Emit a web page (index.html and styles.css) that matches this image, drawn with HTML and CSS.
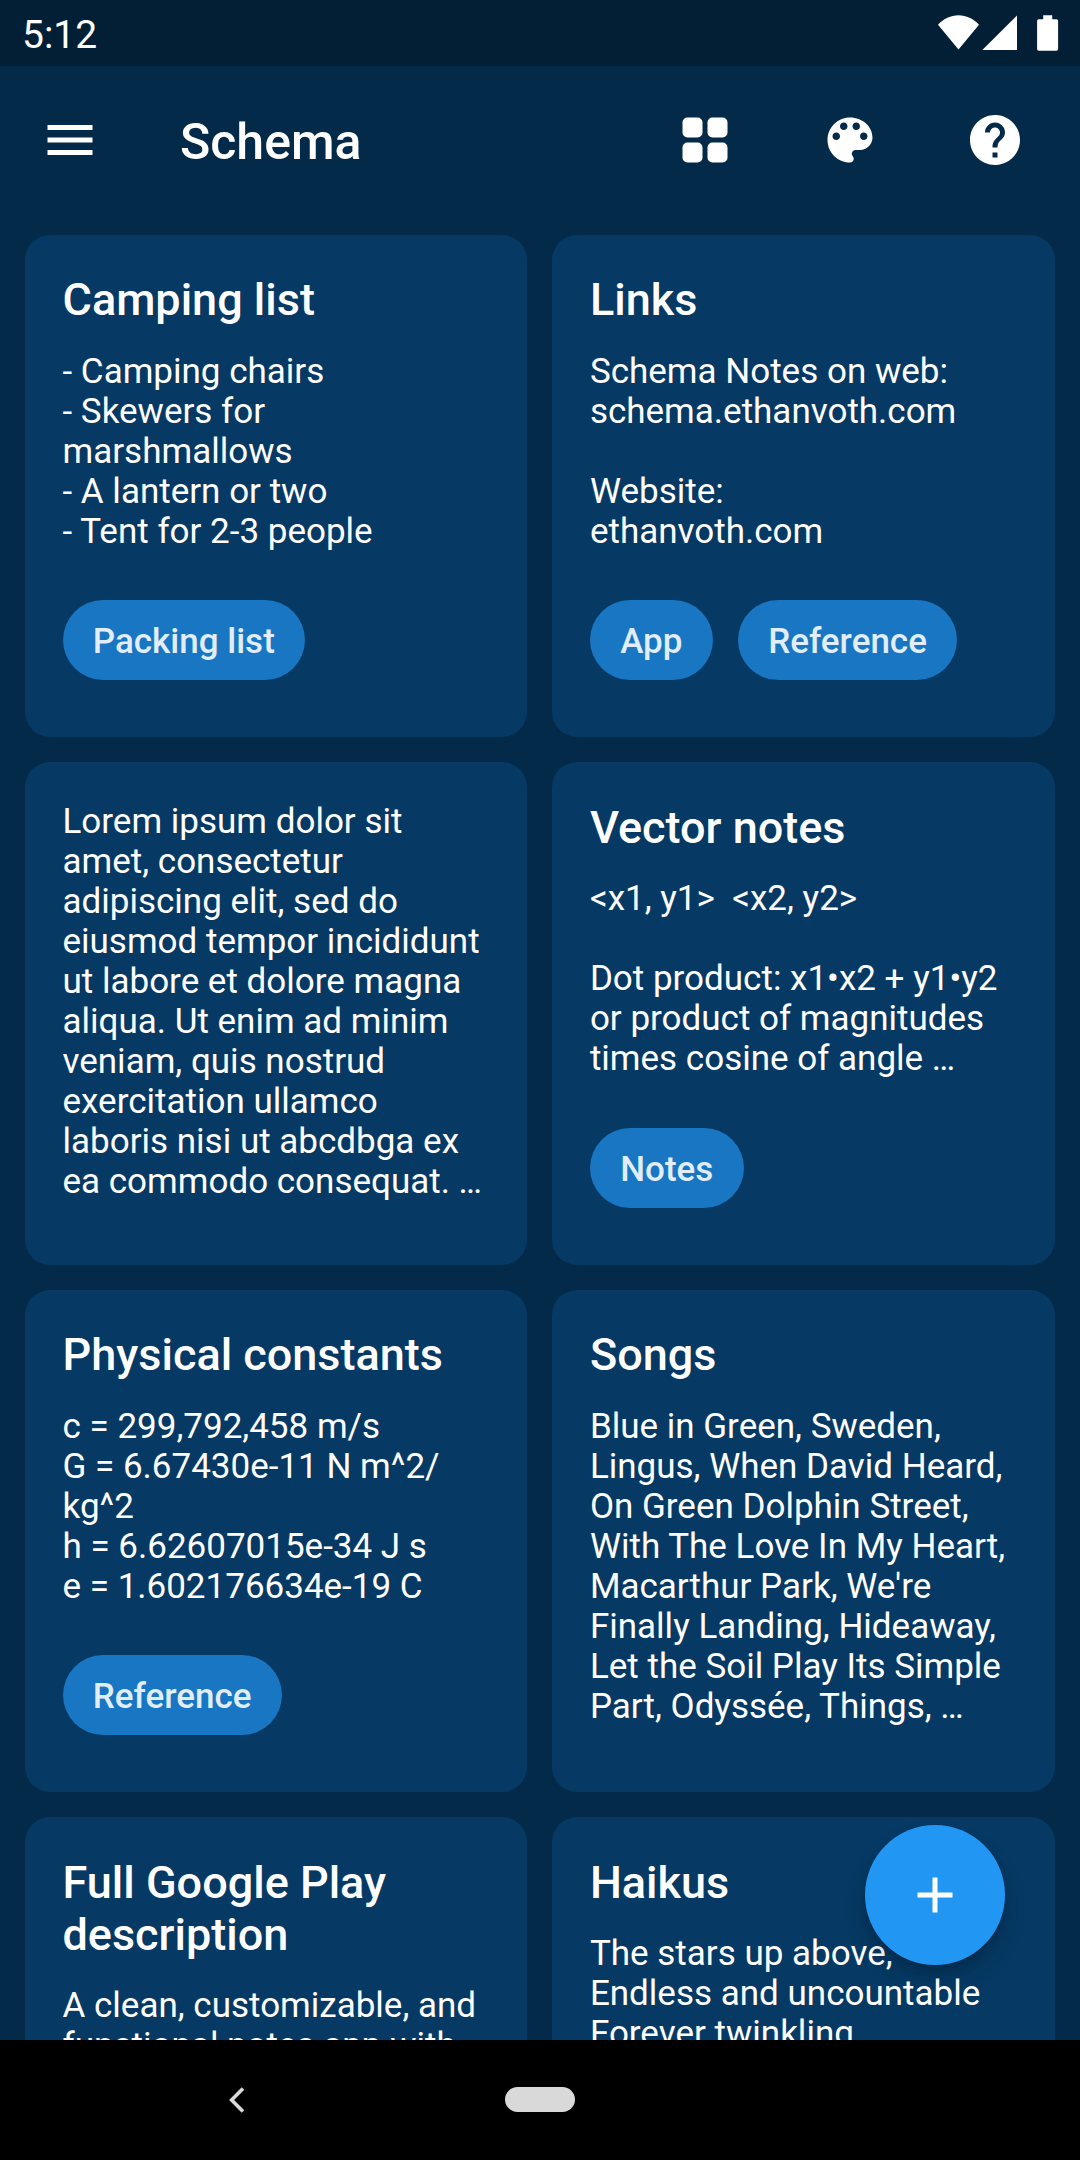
FILE: index.html
```html
<!DOCTYPE html>
<html lang="en">
<head>
<meta charset="utf-8">
<title>Schema</title>
<link rel="stylesheet" href="styles.css">
</head>
<body>
<div class="screen">
  <div class="status-bar">
    <span class="clock">5:12</span>
    <svg class="status-icons" width="122" height="38" viewBox="0 0 122 38" fill="#fff">
      <path d="M0 10.7C5.6 4.6 12.700 1.200 20.500 1.200S35.400 4.600 41 10.700L20.500 35.400z"/>
      <path d="M44.300 36L79 1.600V36z"/>
      <path d="M105.200 1.200h9v4h4.300a1.600 1.600 0 0 1 1.600 1.600v28.300a1.600 1.600 0 0 1-1.600 1.600h-17.800a1.600 1.600 0 0 1-1.600-1.600V6.800a1.600 1.600 0 0 1 1.600-1.600h4.500z"/>
    </svg>
  </div>
  <header class="app-bar">
    <svg class="icon" viewBox="0 0 24 24"><path d="M3 18h18v-2H3v2zm0-5h18v-2H3v2zm0-7v2h18V6H3z"/></svg>
    <h1 class="app-title">Schema</h1>
    <nav class="actions">
      <svg class="icon" viewBox="0 0 24 24"><rect x="3" y="3" width="8" height="8" rx="2"/><rect x="13" y="3" width="8" height="8" rx="2"/><rect x="3" y="13" width="8" height="8" rx="2"/><rect x="13" y="13" width="8" height="8" rx="2"/></svg>
      <svg class="icon" viewBox="0 0 24 24"><path d="M12 3c-4.970 0-9 4.030-9 9s4.030 9 9 9c.83 0 1.500-.67 1.500-1.500 0-.39-.15-.74-.39-1.010-.23-.26-.38-.61-.38-.99 0-.83.67-1.500 1.500-1.500H16c2.760 0 5-2.240 5-5 0-4.420-4.030-8-9-8zm-5.500 9c-.83 0-1.500-.67-1.500-1.500S5.670 9 6.500 9 8 9.670 8 10.500 7.330 12 6.500 12zm3-4C8.670 8 8 7.330 8 6.500S8.670 5 9.500 5s1.500.67 1.500 1.500S10.330 8 9.500 8zm5 0c-.83 0-1.500-.67-1.500-1.500S13.670 5 14.500 5s1.500.67 1.500 1.500S15.330 8 14.500 8zm3 4c-.83 0-1.500-.67-1.500-1.500S16.670 9 17.500 9s1.500.67 1.500 1.500-.67 1.500-1.500 1.500z"/></svg>
      <svg class="icon" viewBox="0 0 24 24"><path d="M12 2C6.480 2 2 6.480 2 12s4.480 10 10 10 10-4.480 10-10S17.520 2 12 2zm1 17h-2v-2h2v2zm2.070-7.750l-.9.920C13.450 12.900 13 13.500 13 15h-2v-.5c0-1.100.45-2.100 1.170-2.830l1.240-1.260c.37-.36.59-.86.59-1.410 0-1.100-.9-2-2-2s-2 .9-2 2H8c0-2.210 1.790-4 4-4s4 1.790 4 4c0 .88-.36 1.680-.93 2.250z"/></svg>
    </nav>
  </header>
  <main class="notes">
    <article class="card">
      <h2 class="card-title">Camping list</h2>
      <p class="card-text">- Camping chairs
- Skewers for
marshmallows
- A lantern or two
- Tent for 2-3 people</p>
      <div class="chips"><span class="chip">Packing list</span></div>
    </article>
    <article class="card">
      <h2 class="card-title">Links</h2>
      <p class="card-text">Schema Notes on web:
schema.ethanvoth.com

Website:
ethanvoth.com</p>
      <div class="chips"><span class="chip">App</span><span class="chip">Reference</span></div>
    </article>
    <article class="card">
      <p class="card-text">Lorem ipsum dolor sit
amet, consectetur
adipiscing elit, sed do
eiusmod tempor incididunt
ut labore et dolore magna
aliqua. Ut enim ad minim
veniam, quis nostrud
exercitation ullamco
laboris nisi ut abcdbga ex
ea commodo consequat. …</p>
    </article>
    <article class="card">
      <h2 class="card-title">Vector notes</h2>
      <p class="card-text">&lt;x1, y1&gt;  &lt;x2, y2&gt;

Dot product: x1•x2 + y1•y2
or product of magnitudes
times cosine of angle …</p>
      <div class="chips"><span class="chip">Notes</span></div>
    </article>
    <article class="card">
      <h2 class="card-title">Physical constants</h2>
      <p class="card-text">c = 299,792,458 m/s
G = 6.67430e-11 N m^2/
kg^2
h = 6.62607015e-34 J s
e = 1.602176634e-19 C</p>
      <div class="chips"><span class="chip">Reference</span></div>
    </article>
    <article class="card">
      <h2 class="card-title">Songs</h2>
      <p class="card-text">Blue in Green, Sweden,
Lingus, When David Heard,
On Green Dolphin Street,
With The Love In My Heart,
Macarthur Park, We're
Finally Landing, Hideaway,
Let the Soil Play Its Simple
Part, Odyssée, Things, …</p>
    </article>
    <article class="card">
      <h2 class="card-title">Full Google Play
description</h2>
      <p class="card-text">A clean, customizable, and
functional notes app with</p>
    </article>
    <article class="card">
      <h2 class="card-title">Haikus</h2>
      <p class="card-text">The stars up above,
Endless and uncountable
Forever twinkling</p>
    </article>
  </main>
  <button class="fab" aria-label="New note">
    <svg class="icon" viewBox="0 0 24 24"><path d="M19 13h-6v6h-2v-6H5v-2h6V5h2v6h6v2z"/></svg>
  </button>
  <footer class="nav-bar">
    <svg class="back" width="16" height="26" viewBox="0 0 16 26"><path d="M14 1.500L2.600 13 14 24.500" fill="none" stroke="#d9d9d9" stroke-width="3.600"/></svg>
    <span class="home"></span>
    <span></span>
  </footer>
</div>
</body>
</html>
```
FILE: styles.css
```css
* { box-sizing: border-box; }

body {
  margin: 0;
  background: #032b49;
  color: #fff;
  font-family: Roboto, sans-serif;
}

.screen {
  position: relative;
  display: flex;
  flex-direction: column;
  width: 1080px;
  height: 2160px;
  overflow: hidden;
}

.status-bar {
  display: flex;
  flex: none;
  align-items: center;
  justify-content: space-between;
  height: 66px;
  padding: 0 20px 0 22px;
  background: #021f36;
}

.clock {
  padding-top: 3px;
  font-size: 39px;
  line-height: 46px;
}

.icon {
  display: block;
  flex: none;
  width: 60px;
  height: 60px;
  fill: #fff;
}

.app-bar {
  display: flex;
  flex: none;
  align-items: center;
  height: 148px;
  padding: 0 55px 0 40px;
}

.app-title {
  margin: 0 0 0 80px;
  padding-top: 4px;
  font-size: 50px;
  font-weight: 500;
  line-height: 58px;
}

.actions {
  display: flex;
  gap: 85px;
  margin-left: auto;
}

.notes {
  display: grid;
  flex: 1;
  grid-template-columns: 502.4px 502.4px;
  grid-auto-rows: 502.4px;
  gap: 25px;
  min-height: 0;
  padding: 21px 25px 0;
  overflow: hidden;
}

.card {
  padding: 39.4px 37.5px 0;
  border-radius: 25px;
  background: #063963;
}

.card-title {
  margin: 0 0 25.7px;
  font-size: 45px;
  font-weight: 500;
  line-height: 52px;
  white-space: pre;
}

.card-text {
  margin: 0;
  font-size: 35px;
  line-height: 40px;
  white-space: pre;
}

.chips {
  display: flex;
  gap: 24.8px;
  margin-top: 48.2px;
}

.chip {
  height: 80px;
  padding: 2px 30.6px 0 30.3px;
  border-radius: 40px;
  background: #1976c2;
  color: #e1edf8;
  font-size: 35px;
  font-weight: 500;
  line-height: 80px;
}

.fab {
  position: absolute;
  top: 1825px;
  left: 865px;
  display: grid;
  place-items: center;
  width: 140px;
  height: 140px;
  padding: 0;
  border: 0;
  border-radius: 50%;
  background: #2196f3;
  box-shadow: 0 8px 12px -2px rgba(0, 0, 0, .16), 0 14px 24px rgba(0, 0, 0, .1);
}

.nav-bar {
  display: grid;
  flex: none;
  grid-template-columns: 1fr 70px 1fr;
  align-items: center;
  height: 120px;
  background: #000;
}

.back { margin-left: 229px; }

.home {
  height: 25px;
  margin-bottom: 1px;
  border-radius: 13px;
  background: #d9d9d9;
}
```
